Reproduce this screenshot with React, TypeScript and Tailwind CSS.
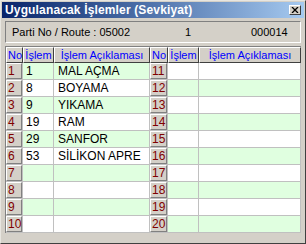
import React from "react";

const left = [
  { no: 1, code: "1", desc: "MAL AÇMA" },
  { no: 2, code: "8", desc: "BOYAMA" },
  { no: 3, code: "9", desc: "YIKAMA" },
  { no: 4, code: "19", desc: "RAM" },
  { no: 5, code: "29", desc: "SANFOR" },
  { no: 6, code: "53", desc: "SİLİKON APRE" },
  { no: 7, code: "", desc: "" },
  { no: 8, code: "", desc: "" },
  { no: 9, code: "", desc: "" },
  { no: 10, code: "", desc: "" },
];

const right = Array.from({ length: 10 }, (_, i) => ({ no: 11 + i, code: "", desc: "" }));

function HeaderCell({ w, children, center = true }: { w: string; children: React.ReactNode; center?: boolean }) {
  return (
    <div
      className={`${w} h-[16px] shrink-0 bg-[#d4d0c8] border-t border-l border-t-white border-l-white border-r border-b border-r-[#404040] border-b-[#404040] text-[#0000ff] text-[11px] leading-[14px] whitespace-nowrap overflow-hidden ${center ? "text-center" : "pl-[1px]"}`}
    >
      {children}
    </div>
  );
}

function Row({ no, code, desc, green, noW, descW }: { no: number; code: string; desc: string; green: boolean; noW: string; descW: string }) {
  const bg = green ? "bg-[#e0ffe0]" : "bg-white";
  return (
    <div className="flex h-[17px]">
      <div className={`${noW} shrink-0 h-[17px] border-r border-b border-[#c0c0c0] bg-[#d4d0c8] p-0`}>
        <div className="h-full w-full border-t border-l border-t-white border-l-white border-r border-b border-r-[#808080] border-b-[#808080] text-[#800000] text-[12px] leading-[15px] pl-[1px]">
          {no}
        </div>
      </div>
      <div className={`w-[31px] shrink-0 h-[17px] border-r border-b border-[#c0c0c0] ${bg} text-[12px] leading-[16px] pl-[3px] text-black`}>
        {code}
      </div>
      <div className={`${descW} shrink-0 h-[17px] border-r border-b border-[#c0c0c0] ${bg} text-[12px] leading-[16px] pl-[4px] text-black whitespace-nowrap`}>
        {desc}
      </div>
    </div>
  );
}

export default function App() {
  return (
    <div
      className="w-[306px] h-[244px] bg-[#d4d0c8] border border-t-[#e8e6e0] border-l-[#e8e6e0] border-r-[#404040] border-b-[#404040] p-[1px] flex flex-col overflow-hidden"
      style={{ fontFamily: '"Liberation Sans", Arial, sans-serif' }}
    >
      <div className="h-[16px] shrink-0 flex items-center justify-between bg-gradient-to-r from-[#0a246a] to-[#a6caf0] pl-[3px] pr-[3px]">
        <span className="text-white font-bold text-[12px] tracking-[0.15px] leading-[14px] whitespace-nowrap">
          Uygulanacak İşlemler (Sevkiyat)
        </span>
        <div className="w-[12px] h-[10px] bg-[#d4d0c8] border border-t-white border-l-white border-r-[#404040] border-b-[#404040] flex items-center justify-center">
          <svg width="8" height="6" viewBox="0 0 8 6">
            <path d="M1 0 L7 6 M7 0 L1 6" stroke="#000" strokeWidth="1.3" />
          </svg>
        </div>
      </div>

      <div className="mt-[3px] mx-[3px] h-[22px] shrink-0 border border-t-[#808080] border-l-[#808080] border-r-white border-b-white flex items-center text-[11px] text-black pl-[6px]">
        <span className="w-[173px] shrink-0 whitespace-nowrap">Parti No / Route : 05002</span>
        <span className="w-[66px] shrink-0">1</span>
        <span>000014</span>
      </div>

      <div className="mt-[3px] ml-[3px] flex border-l border-t border-[#808080] w-[296px]">
        <div className="flex flex-col">
          <div className="flex">
            <HeaderCell w="w-[17px]" center={false}>No</HeaderCell>
            <HeaderCell w="w-[31px]">İşlem</HeaderCell>
            <HeaderCell w="w-[96px]">İşlem Açıklaması</HeaderCell>
          </div>
          {left.map((r, i) => (
            <Row key={r.no} {...r} green={i % 2 === 0} noW="w-[17px]" descW="w-[96px]" />
          ))}
        </div>
        <div className="flex flex-col">
          <div className="flex">
            <HeaderCell w="w-[18px]" center={false}>No</HeaderCell>
            <HeaderCell w="w-[31px]">İşlem</HeaderCell>
            <HeaderCell w="w-[102px]">İşlem Açıklaması</HeaderCell>
          </div>
          {right.map((r, i) => (
            <Row key={r.no} {...r} green={i % 2 === 1} noW="w-[18px]" descW="w-[102px]" />
          ))}
        </div>
      </div>
    </div>
  );
}
